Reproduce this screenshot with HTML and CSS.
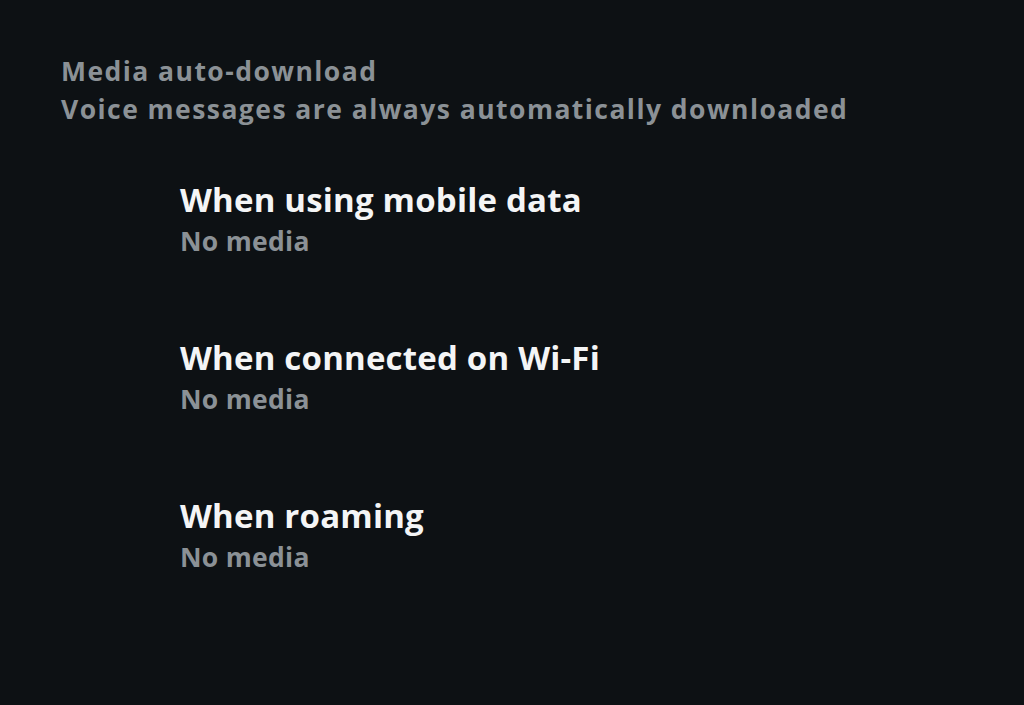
FILE: index.html
```html
<!DOCTYPE html>
<html lang="en">

<head>
    <meta charset="UTF-8">
    <meta name="viewport" content="width=device-width, initial-scale=1.0">
    <title>Media auto-download</title>
    <link rel="stylesheet" href="styles.css">
</head>

<body>
    <div class="header">
        <p class="header-title">Media auto-download</p>
        <p class="header-note">Voice messages are always automatically downloaded</p>
    </div>
    <ul class="options">
        <li class="option">
            <p class="option-title">When using mobile data</p>
            <p class="option-value">No media</p>
        </li>
        <li class="option">
            <p class="option-title">When connected on Wi-Fi</p>
            <p class="option-value">No media</p>
        </li>
        <li class="option">
            <p class="option-title">When roaming</p>
            <p class="option-value">No media</p>
        </li>
    </ul>
</body>

</html>
```

FILE: styles.css
```css
* {
    margin: 0;
    padding: 0;
    font-family: 'Open Sans', Roboto, sans-serif;
}

body {
    background-color: #0d1114;
    width: 1024px;
    height: 705px;
    overflow: hidden;
}

.header {
    padding-top: 52px;
    padding-left: 61px;
    color: #8b9196;
    font-size: 26.5px;
    font-weight: 700;
    letter-spacing: 1.45px;
    line-height: 38px;
}

.options {
    list-style: none;
    padding-left: 180px;
    padding-top: 51px;
    display: flex;
    flex-direction: column;
    gap: 75px;
}

.option-title {
    color: #f4f5f6;
    font-size: 33px;
    font-weight: 700;
    letter-spacing: 0.2px;
    line-height: 42px;
}

.option-value {
    color: #8b9196;
    font-size: 26.5px;
    font-weight: 700;
    letter-spacing: 0.3px;
    line-height: 41px;
}
```
